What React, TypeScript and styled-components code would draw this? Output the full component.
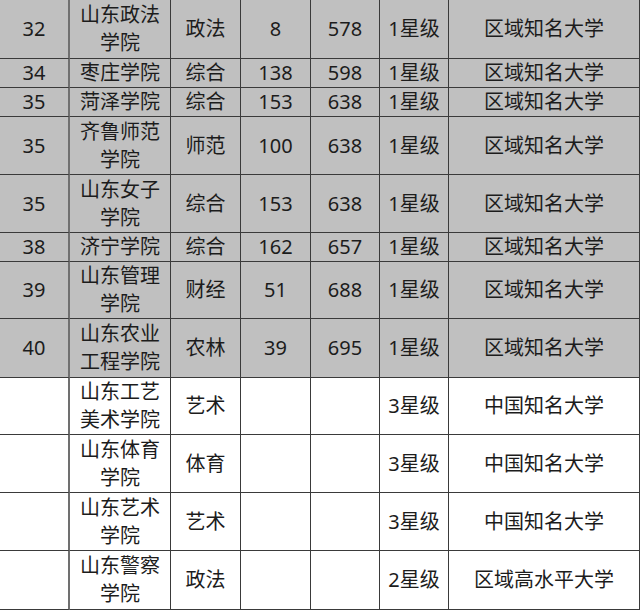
import React from "react";
import styled, {createGlobalStyle} from "styled-components";

interface IRow {
    rank: string
    name: string
    type: string
    count: string
    score: string
    star: string
    level: string
    h: number
    shaded: boolean
}

const rows: IRow[] = [
    {rank: "32", name: "山东政法学院", type: "政法", count: "8", score: "578", star: "1星级", level: "区域知名大学", h: 59, shaded: true},
    {rank: "34", name: "枣庄学院", type: "综合", count: "138", score: "598", star: "1星级", level: "区域知名大学", h: 29, shaded: true},
    {rank: "35", name: "菏泽学院", type: "综合", count: "153", score: "638", star: "1星级", level: "区域知名大学", h: 29, shaded: true},
    {rank: "35", name: "齐鲁师范学院", type: "师范", count: "100", score: "638", star: "1星级", level: "区域知名大学", h: 58, shaded: true},
    {rank: "35", name: "山东女子学院", type: "综合", count: "153", score: "638", star: "1星级", level: "区域知名大学", h: 58, shaded: true},
    {rank: "38", name: "济宁学院", type: "综合", count: "162", score: "657", star: "1星级", level: "区域知名大学", h: 29, shaded: true},
    {rank: "39", name: "山东管理学院", type: "财经", count: "51", score: "688", star: "1星级", level: "区域知名大学", h: 57, shaded: true},
    {rank: "40", name: "山东农业工程学院", type: "农林", count: "39", score: "695", star: "1星级", level: "区域知名大学", h: 59, shaded: true},
    {rank: "", name: "山东工艺美术学院", type: "艺术", count: "", score: "", star: "3星级", level: "中国知名大学", h: 57, shaded: false},
    {rank: "", name: "山东体育学院", type: "体育", count: "", score: "", star: "3星级", level: "中国知名大学", h: 58, shaded: false},
    {rank: "", name: "山东艺术学院", type: "艺术", count: "", score: "", star: "3星级", level: "中国知名大学", h: 58, shaded: false},
    {rank: "", name: "山东警察学院", type: "政法", count: "", score: "", star: "2星级", level: "区域高水平大学", h: 59, shaded: false},
]

const colWidths = [70, 101, 70, 70, 69, 69, 191]

const GlobalStyle = createGlobalStyle`
  html, body {
    margin: 0;
    padding: 0;
    background: #ffffff;
  }
`

const Table = styled.table`
  width: 640px;
  table-layout: fixed;
  border-collapse: separate;
  border-spacing: 0;
  font-family: "Noto Sans", "Noto Sans CJK SC", sans-serif;
  font-size: 20px;
  line-height: 28px;
  color: #1c1c1c;
`

const Row = styled.tr<{ $shaded: boolean }>`
  background-color: ${p => p.$shaded ? "#c0c0c0" : "#ffffff"};
`

const Cell = styled.td<{ $h: number }>`
  box-sizing: border-box;
  height: ${p => p.$h}px;
  padding: 0 4px;
  text-align: center;
  vertical-align: middle;
  border-right: 1px solid #3a3a3a;
  border-bottom: 1px solid #3a3a3a;
  overflow: hidden;
`

const RankCell = styled(Cell)`
  border-right: 2px solid #707070;
`

const App: React.FunctionComponent = () => {
    return (
        <>
            <GlobalStyle/>
            <Table>
                <colgroup>
                    {colWidths.map((w, i) => <col key={i} style={{width: w}}/>)}
                </colgroup>
                <tbody>
                {rows.map((r, i) => (
                    <Row key={i} $shaded={r.shaded}>
                        <RankCell $h={r.h}>{r.rank}</RankCell>
                        <Cell $h={r.h}>{r.name}</Cell>
                        <Cell $h={r.h}>{r.type}</Cell>
                        <Cell $h={r.h}>{r.count}</Cell>
                        <Cell $h={r.h}>{r.score}</Cell>
                        <Cell $h={r.h}>{r.star}</Cell>
                        <Cell $h={r.h}>{r.level}</Cell>
                    </Row>
                ))}
                </tbody>
            </Table>
        </>
    )
}

export default App
